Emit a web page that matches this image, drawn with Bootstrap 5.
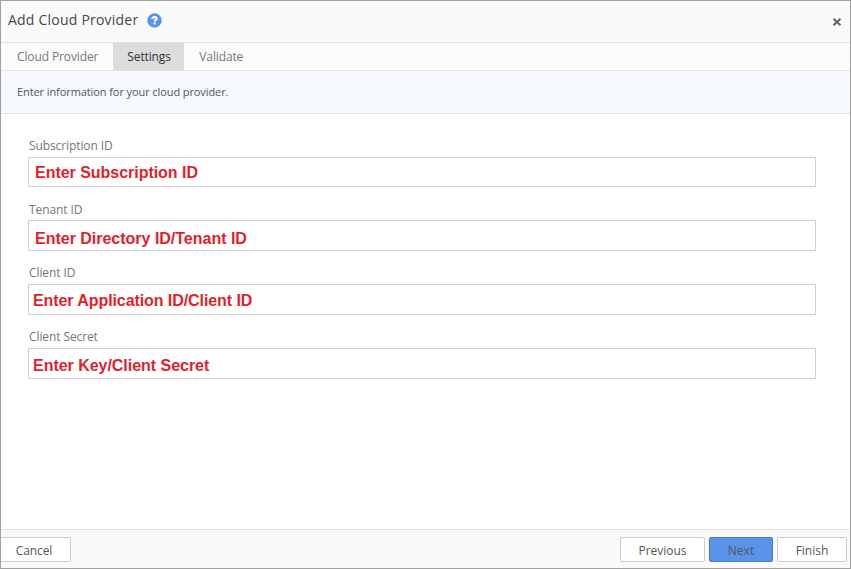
<!DOCTYPE html>
<html lang="en">
<head>
<meta charset="utf-8">
<meta name="viewport" content="width=device-width, initial-scale=1">
<title>Add Cloud Provider</title>
<link href="https://cdn.jsdelivr.net/npm/bootstrap@5.3.0/dist/css/bootstrap.min.css" rel="stylesheet">
<style>
body { font-family: "Open Sans", sans-serif; font-size: 12px; line-height: 18px; color: #555; }
.wizard { height: 569px; border: 1px solid #a0a0a0; }
.wizard-head { height: 42px; background: #fafafa; border-bottom: 1px solid #e2e2e2; padding: 0 8px 4px 7px; }
.wizard-title { font-size: 14px; line-height: 20px; color: #484848; letter-spacing: .22px; }
.help-icon { margin-left: 9px; margin-top: 1px; }
.close-x { width: 10px; height: 10px; margin-top: 4px; }
.wizard-tabs { height: 28px; background: #fcfcfc; border-bottom: 1px solid #e2e2e2; letter-spacing: -.12px; }
.wizard-tabs .nav-link { height: 27px; padding: 5px 15px 0 15px; border-radius: 0; color: #777; }
.wizard-tabs .nav-link:first-child { padding-left: 16px; }
.wizard-tabs .nav-link.active { width: 71px; background: #dcdcdc; color: #333; padding-left: 14px; padding-right: 0; }
.wizard-info { height: 43px; background: #f6faff; border-bottom: 1px solid #e2e2e2; padding-left: 16px; font-size: 11px; letter-spacing: -.09px; color: #555; }
.wizard-body { padding: 23px 34px 0 27px; }
.field { height: 64px; }
.field .form-label { height: 20px; margin-left: 1px; color: #777; letter-spacing: -.1px; }
.field .form-control { height: 31px; padding: 2px 6px 0; border: 1px solid #d0d0d0; border-radius: 0; font: bold 16px/20px "Liberation Sans", Arial, sans-serif; letter-spacing: -.03px; color: #df1f2d; }
.field-first .form-control { height: 30px; }
.field-tenant { height: 63px; }
.field-tenant .form-label { height: 19px; }
.field-tenant .form-control { padding-top: 6px; letter-spacing: -.01px; }
.field-client .form-control { padding-left: 4px; letter-spacing: -.08px; }
.field-secret .form-control { padding-left: 4px; padding-top: 4px; }
.wizard-foot { height: 39px; background: #fafafa; border-top: 1px solid #e2e2e2; padding: 7px 3px 0 0; gap: 4px; }
.wizard-foot .btn { height: 25px; padding: 3px 0 0; border: 1px solid #ccc; border-radius: 2px; background: #fff; color: #555; font-size: 12px; line-height: 18px; }
.wizard-foot .btn-cancel { width: 70px; border-left: 0; border-radius: 0 2px 2px 0; padding-right: 3px; letter-spacing: -.1px; }
.wizard-foot .btn-prev { width: 85px; }
.wizard-foot .btn-next { width: 64px; background: #5b93ea; border-color: #4679c9; }
.wizard-foot .btn-finish { width: 70px; }
</style>
<script src="https://cdn.jsdelivr.net/npm/bootstrap@5.3.0/dist/js/bootstrap.bundle.min.js"></script>
</head>
<body>
<div class="wizard d-flex flex-column bg-white overflow-hidden">
  <header class="wizard-head d-flex align-items-center flex-shrink-0">
    <h1 class="wizard-title fw-normal mb-0">Add Cloud Provider</h1>
    <svg class="help-icon" width="15" height="15" viewBox="0 0 15 15" aria-label="Help">
      <circle cx="7.5" cy="7.5" r="7.2" fill="#5b93ea"/>
      <path d="M5.2 5.900C5.400 4.600 6.200 4 7.500 4c1.400 0 2.200.6 2.200 1.600 0 1.400-2 1.300-2 3" fill="none" stroke="#fff" stroke-width="2"/>
      <rect x="6.500" y="9.500" width="2.200" height="1.900" fill="#fff"/>
    </svg>
    <svg class="close-x ms-auto" viewBox="0 0 10 10" aria-label="Close"><path d="M1.500 1.700 8.500 8.300M8.500 1.700 1.500 8.300" stroke="#666" stroke-width="2.100"/></svg>
  </header>
  <nav class="wizard-tabs nav flex-shrink-0">
    <a class="nav-link" href="#">Cloud Provider</a>
    <a class="nav-link active" href="#">Settings</a>
    <a class="nav-link" href="#">Validate</a>
  </nav>
  <div class="wizard-info d-flex align-items-center flex-shrink-0">Enter information for your cloud provider.</div>
  <main class="wizard-body flex-grow-1">
    <div class="field field-first">
      <label class="form-label d-block mb-0" for="sub">Subscription ID</label>
      <input class="form-control" id="sub" value="Enter Subscription ID">
    </div>
    <div class="field field-tenant">
      <label class="form-label d-block mb-0" for="tenant">Tenant ID</label>
      <input class="form-control" id="tenant" value="Enter Directory ID/Tenant ID">
    </div>
    <div class="field field-client">
      <label class="form-label d-block mb-0" for="client">Client ID</label>
      <input class="form-control" id="client" value="Enter Application ID/Client ID">
    </div>
    <div class="field field-secret">
      <label class="form-label d-block mb-0" for="secret">Client Secret</label>
      <input class="form-control" id="secret" value="Enter Key/Client Secret">
    </div>
  </main>
  <footer class="wizard-foot d-flex flex-shrink-0">
    <button class="btn btn-cancel me-auto">Cancel</button>
    <button class="btn btn-prev">Previous</button>
    <button class="btn btn-next">Next</button>
    <button class="btn btn-finish">Finish</button>
  </footer>
</div>
</body>
</html>
